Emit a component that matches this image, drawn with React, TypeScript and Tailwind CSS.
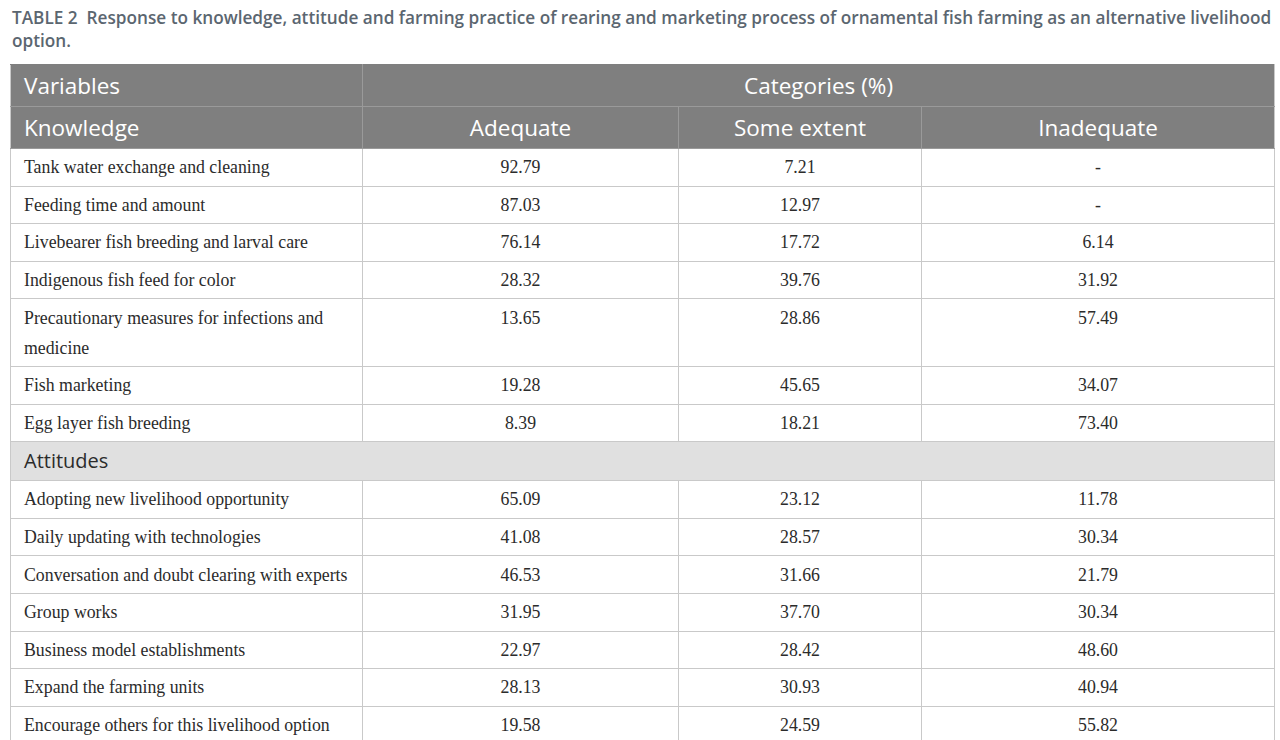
const knowledge: [string, string, string, string][] = [
  ["Tank water exchange and cleaning", "92.79", "7.21", "-"],
  ["Feeding time and amount", "87.03", "12.97", "-"],
  ["Livebearer fish breeding and larval care", "76.14", "17.72", "6.14"],
  ["Indigenous fish feed for color", "28.32", "39.76", "31.92"],
  ["Precautionary measures for infections and medicine", "13.65", "28.86", "57.49"],
  ["Fish marketing", "19.28", "45.65", "34.07"],
  ["Egg layer fish breeding", "8.39", "18.21", "73.40"],
];

const attitudes: [string, string, string, string][] = [
  ["Adopting new livelihood opportunity", "65.09", "23.12", "11.78"],
  ["Daily updating with technologies", "41.08", "28.57", "30.34"],
  ["Conversation and doubt clearing with experts", "46.53", "31.66", "21.79"],
  ["Group works", "31.95", "37.70", "30.34"],
  ["Business model establishments", "22.97", "28.42", "48.60"],
  ["Expand the farming units", "28.13", "30.93", "40.94"],
  ["Encourage others for this livelihood option", "19.58", "24.59", "55.82"],
];

const sans = "font-['Open_Sans',sans-serif]";
const serif = "font-['Liberation_Serif',serif]";

function DataRow({ row }: { row: [string, string, string, string] }) {
  return (
    <tr className={`${serif} text-[17.8px] leading-[30px] text-[#2b2b2b]`}>
      <td className="border border-[#c9c9c9] px-[13px] py-[3.3px] align-top">{row[0]}</td>
      <td className="border border-[#c9c9c9] px-3 py-[3.3px] text-center align-top">{row[1]}</td>
      <td className="border border-[#c9c9c9] px-3 py-[3.3px] text-center align-top">{row[2]}</td>
      <td className="border border-[#c9c9c9] px-3 py-[3.3px] text-center align-top">{row[3]}</td>
    </tr>
  );
}

export default function App() {
  return (
    <div className="w-[1280px] h-[740px] overflow-hidden bg-white">
      <p className={`${sans} pl-[12px] pr-1 pt-[6px] text-[17.2px] leading-[23px] font-semibold text-[#5b6670]`}>
        TABLE 2&nbsp; Response to knowledge, attitude and farming practice of rearing and marketing process of ornamental fish farming as an alternative livelihood option.
      </p>

      <table className="ml-[10px] mt-[12px] w-[1264px] table-fixed border-collapse">
        <colgroup>
          <col className="w-[352px]" />
          <col className="w-[316px]" />
          <col className="w-[243px]" />
          <col className="w-[353px]" />
        </colgroup>
        <thead className={`${sans} text-[22.5px] text-white`}>
          <tr className="h-[42px] bg-[#7f7f7f]">
            <th className="border border-[#9a9a9a] border-t-[#7f7f7f] border-l-[#c9c9c9] px-[13px] text-left font-normal">Variables</th>
            <th colSpan={3} className="border border-[#9a9a9a] border-t-[#7f7f7f] border-r-[#c9c9c9] text-center font-normal">
              Categories (%)
            </th>
          </tr>
          <tr className="h-[42px] bg-[#7f7f7f]">
            <th className="border border-[#9a9a9a] border-l-[#c9c9c9] px-[13px] text-left font-normal">Knowledge</th>
            <th className="border border-[#9a9a9a] text-center font-normal">Adequate</th>
            <th className="border border-[#9a9a9a] text-center font-normal">Some extent</th>
            <th className="border border-[#9a9a9a] border-r-[#c9c9c9] text-center font-normal">Inadequate</th>
          </tr>
        </thead>
        <tbody>
          {knowledge.map((r) => (
            <DataRow key={r[0]} row={r} />
          ))}
          <tr className={`${sans} h-[39px] bg-[#e0e0e0] text-[20px] text-[#2b2b2b]`}>
            <td colSpan={4} className="border border-[#c9c9c9] px-[13px]">
              Attitudes
            </td>
          </tr>
          {attitudes.map((r) => (
            <DataRow key={r[0]} row={r} />
          ))}
        </tbody>
      </table>
    </div>
  );
}
